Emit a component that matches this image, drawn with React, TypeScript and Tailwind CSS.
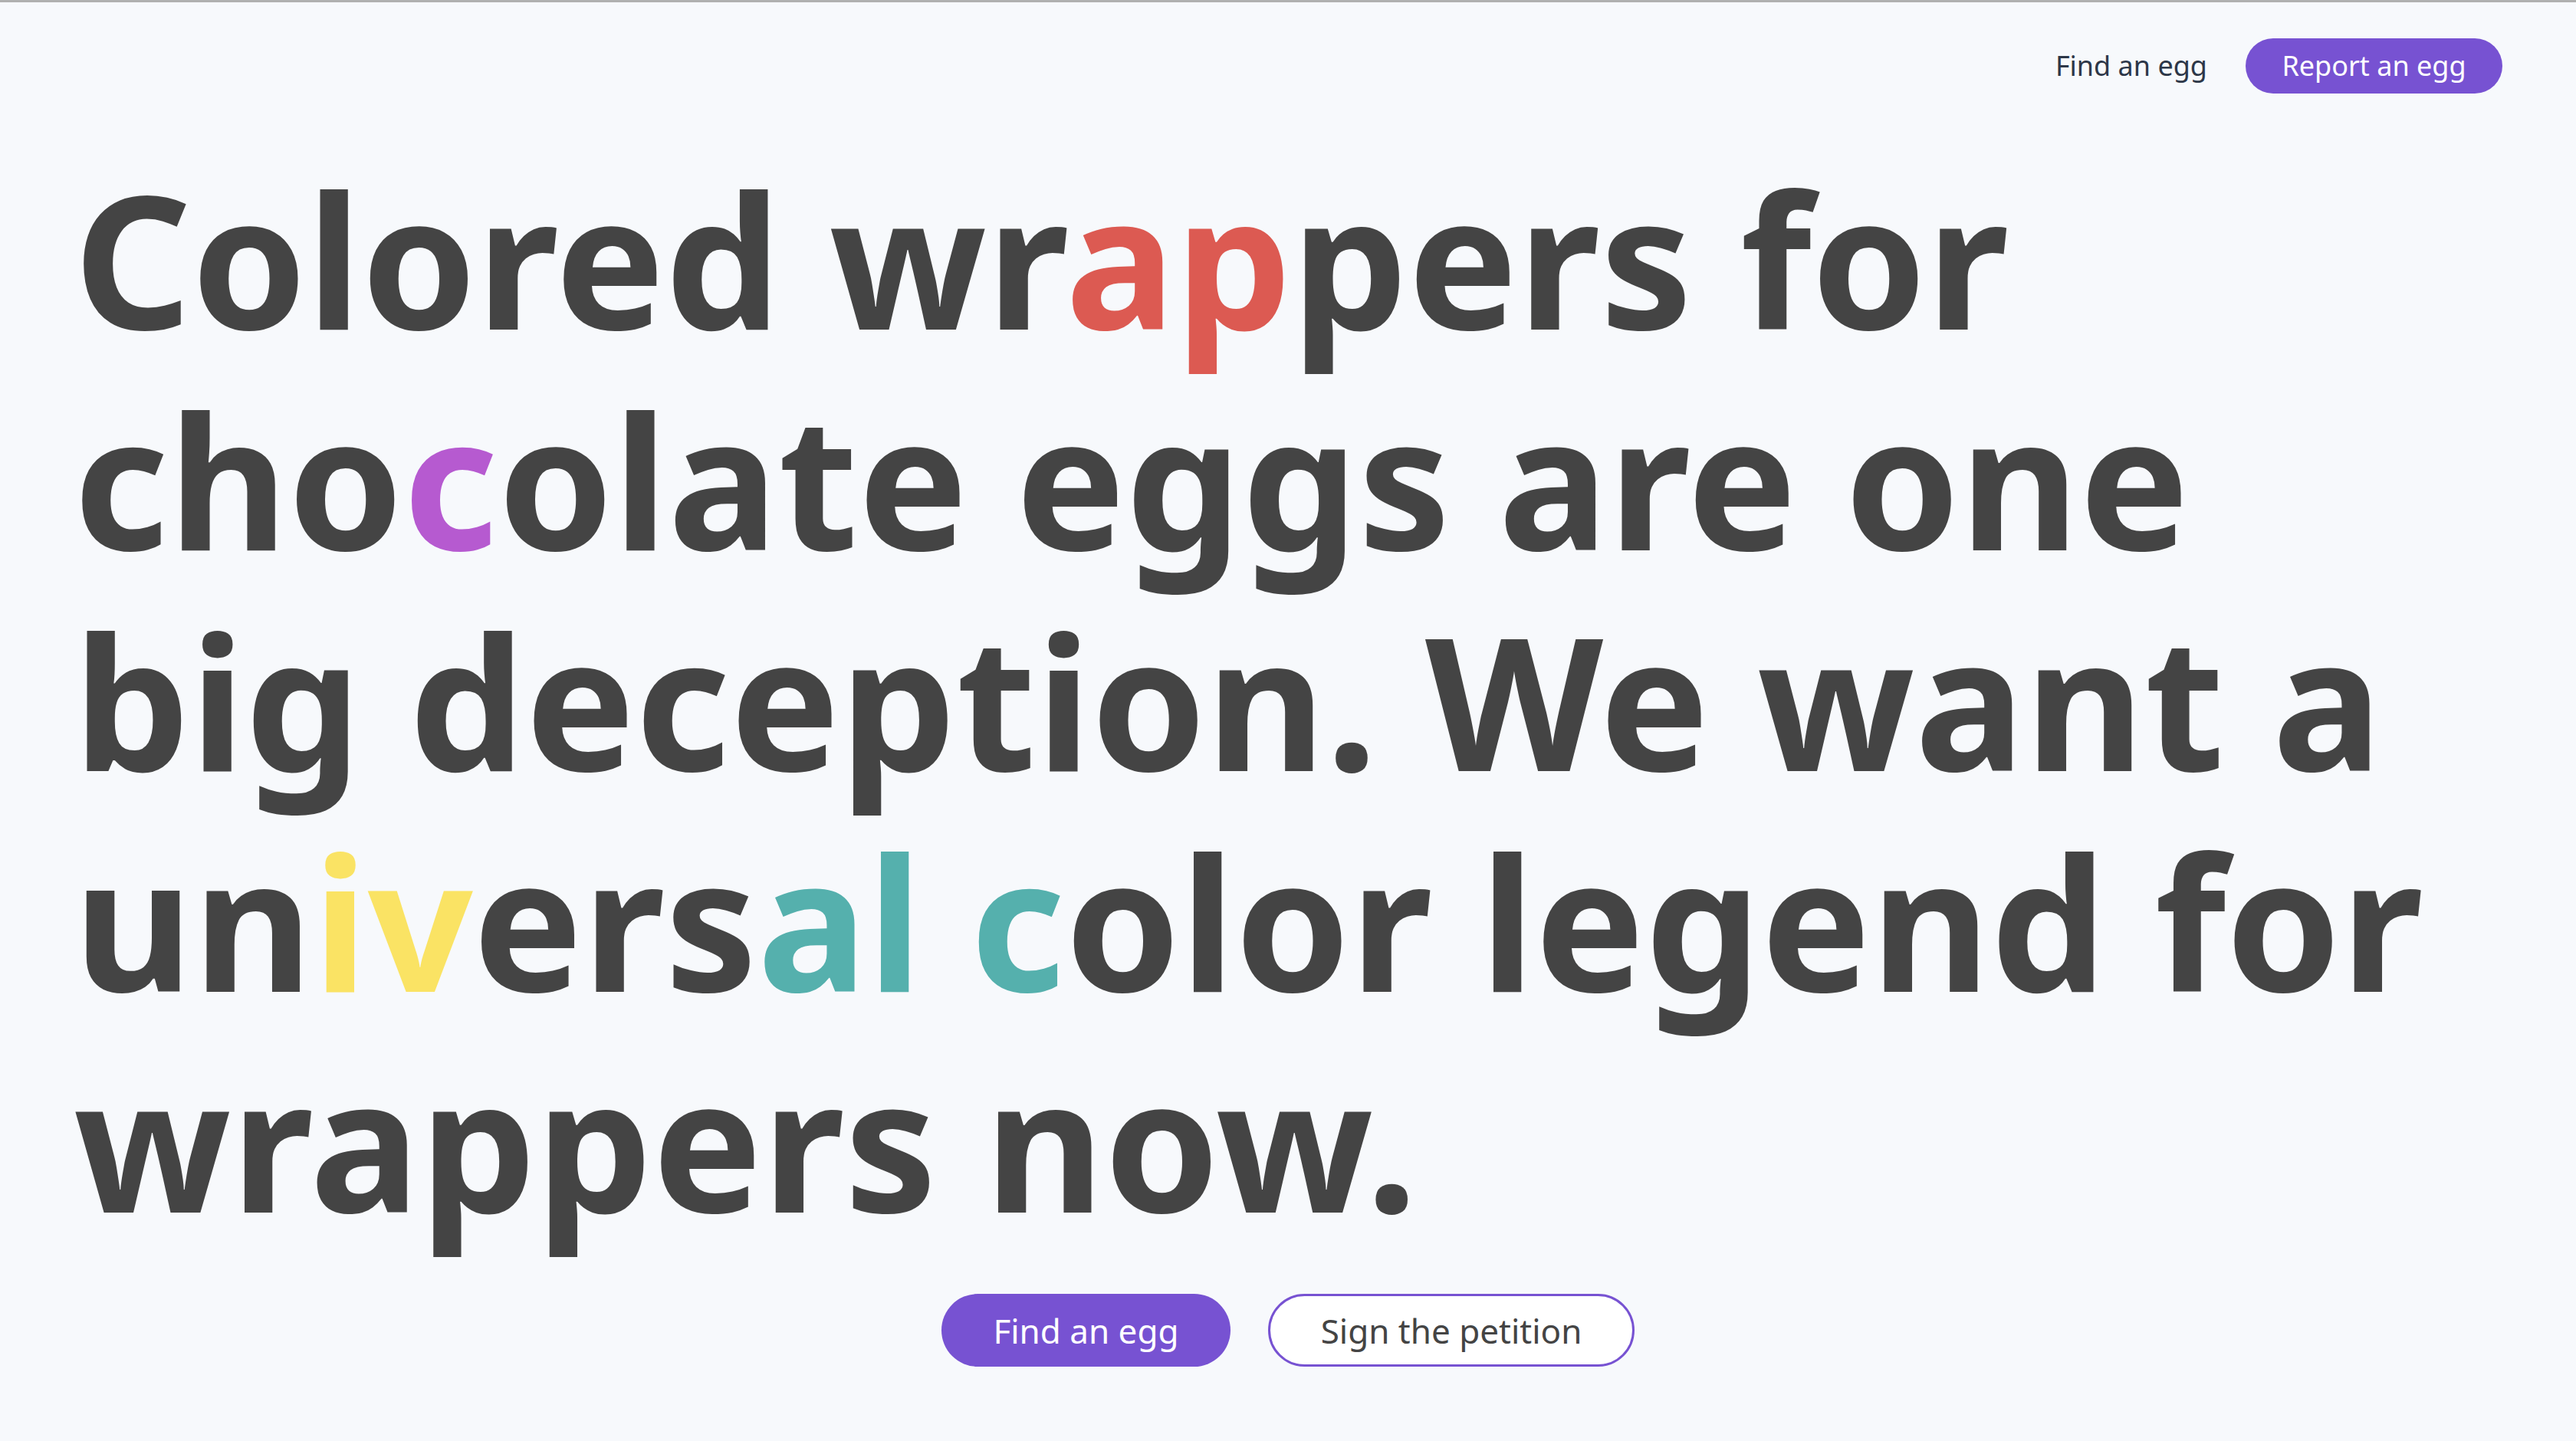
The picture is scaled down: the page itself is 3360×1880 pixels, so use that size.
import React from "react";

export default function App() {
  return (
    <div
      className="min-h-screen w-full bg-[#f7f9fc] border-t-[3px] border-[#b0b0b0] text-[#444444]"
      style={{ fontFamily: '"Noto Sans", "Open Sans", sans-serif' }}
    >
      <header className="flex items-center justify-end gap-[50px] px-[96px] pt-[47px]">
        <a className="text-[36px] text-[#2d3748] leading-none">Find an egg</a>
        <a className="flex h-[72px] w-[335px] items-center justify-center rounded-full bg-[#7752d2] text-[36px] text-white">
          Report an egg
        </a>
      </header>
      <main className="px-[96px] pt-[71px]">
        <h1 className="text-[240px] font-bold leading-[288px]">
          Colored wr<span className="text-[#dc5a52]">ap</span>pers for cho
          <span className="text-[#b65ad0]">c</span>olate eggs are one big deception. We want a un
          <span className="text-[#fae364]">iv</span>ers
          <span className="text-[#55b0ad]">al c</span>olor legend for wrappers now.
        </h1>
        <div className="mt-[55px] flex justify-center gap-[49px]">
          <a className="flex h-[95px] w-[377px] items-center justify-center rounded-full bg-[#7752d2] text-[44px] text-white">
            Find an egg
          </a>
          <a className="flex h-[95px] w-[478px] items-center justify-center rounded-full border-[3px] border-[#7752d2] bg-white text-[44px] text-[#444444]">
            Sign the petition
          </a>
        </div>
      </main>
    </div>
  );
}
